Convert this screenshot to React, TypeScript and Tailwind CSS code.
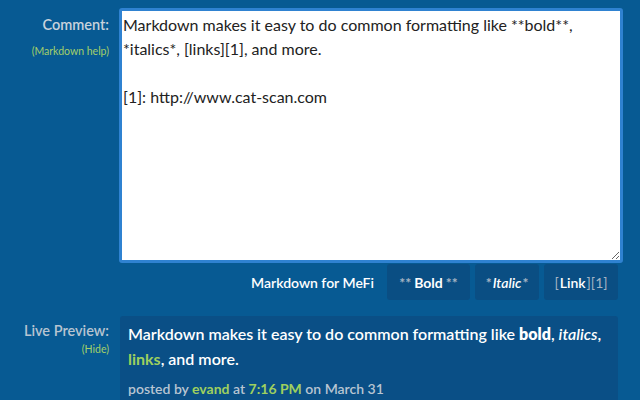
export default function App() {
  return (
    <div className="w-[640px] h-[400px] overflow-hidden bg-[#075a93] font-['Lato',sans-serif]">
      {/* ── Comment row ── */}
      <div className="flex pt-2">
        <div className="w-[110px] shrink-0 flex flex-col items-end pr-[1px] pt-[8px]">
          <div className="text-[14.5px] font-semibold text-[#c8d2dc] leading-[18px]">Comment:</div>
          <div className="text-[10.5px] text-[#a3cf6a] mt-[11px] leading-[12px]">(Markdown help)</div>
        </div>
        <div className="ml-[9px] w-[504px] h-[255px] rounded-[3px] border-[3px] border-[#2f82d1] bg-white">
          <textarea
            readOnly
            className="w-full h-full resize-y outline-none px-[1px] pt-[2px] text-[16px] leading-[24px] text-[#222] font-['Lato',sans-serif]"
            defaultValue={
              "Markdown makes it easy to do common formatting like **bold**, *italics*, [links][1], and more.\n\n[1]: http://www.cat-scan.com"
            }
          />
        </div>
      </div>

      {/* ── Toolbar ── */}
      <div className="flex items-center justify-end gap-[5px] w-[618px] mt-[1px]">
        <span className="text-[14px] font-semibold text-white mr-[8px]">Markdown for MeFi</span>
        <div className="h-[36px] w-[83px] rounded-[3px] bg-[#0a4e83] flex items-center justify-center gap-[3px] text-[14px]">
          <span className="text-[#a5b4c4] font-bold">**</span>
          <span className="text-white font-bold">Bold</span>
          <span className="text-[#a5b4c4] font-bold">**</span>
        </div>
        <div className="h-[36px] w-[64px] rounded-[3px] bg-[#0a4e83] flex items-center justify-center gap-[1px] text-[14px]">
          <span className="text-[#a5b4c4] font-bold">*</span>
          <span className="text-white italic font-semibold">Italic</span>
          <span className="text-[#a5b4c4] font-bold">*</span>
        </div>
        <div className="h-[36px] w-[74px] rounded-[3px] bg-[#0a4e83] flex items-center justify-center text-[14px]">
          <span className="text-[#a5b4c4] mr-[1px]">[</span>
          <span className="text-white font-semibold">Link</span>
          <span className="text-[#a5b4c4] ml-[1px]">][1]</span>
        </div>
      </div>

      {/* ── Live preview ── */}
      <div className="flex mt-[16px]">
        <div className="w-[110px] shrink-0 flex flex-col items-end pr-[1px] pt-[6px]">
          <div className="text-[14.5px] font-semibold text-[#b7c4d1] leading-[18px]">Live Preview:</div>
          <div className="text-[10.5px] text-[#a3cf6a] mt-[3px] leading-[12px]">(Hide)</div>
        </div>
        <div className="ml-[10px] w-[498px] h-[100px] rounded-[3px] bg-[#0a4f86] pl-[8px] pr-0 pt-[5px]">
          <p className="text-[16px] leading-[25px] text-white font-semibold">
            Markdown makes it easy to do common formatting like <b className="font-extrabold">bold</b>,{" "}
            <i>italics</i>, <a className="text-[#9fd05e] font-bold">links</a>, and more.
          </p>
          <p className="text-[14px] text-[#b8c5d2] font-semibold mt-[7px]">
            posted by <a className="text-[#9fd05e] font-bold">evand</a> at{" "}
            <a className="text-[#9fd05e] font-bold">7:16 PM</a> on March 31
          </p>
        </div>
      </div>
    </div>
  );
}
